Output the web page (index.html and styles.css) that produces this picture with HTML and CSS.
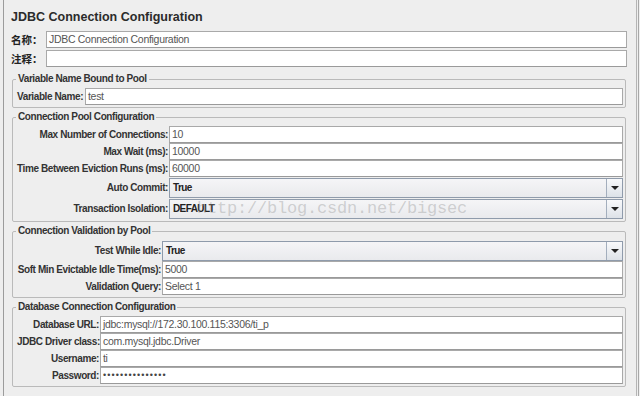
FILE: index.html
```html
<!DOCTYPE html>
<html>
<head>
<meta charset="UTF-8">
<title>JDBC Connection Configuration</title>
<link rel="stylesheet" href="styles.css">
</head>
<body>
<div class="window">
	<div class="panel">
		<h1 class="title">JDBC Connection Configuration</h1>
		<div class="top-row">
			<label class="cjk">名称：</label>
			<div class="field">JDBC Connection Configuration</div>
		</div>
		<div class="top-row">
			<label class="cjk">注释：</label>
			<div class="field"></div>
		</div>

		<fieldset class="group first">
			<legend>Variable Name Bound to Pool</legend>
			<div class="grid g-var">
				<label>Variable Name:</label>
				<div class="field">test</div>
			</div>
		</fieldset>

		<fieldset class="group">
			<legend>Connection Pool Configuration</legend>
			<div class="grid g-pool">
				<label>Max Number of Connections:</label>
				<div class="field">10</div>
				<label>Max Wait (ms):</label>
				<div class="field">10000</div>
				<label>Time Between Eviction Runs (ms):</label>
				<div class="field">60000</div>
				<label>Auto Commit:</label>
				<div class="combo"><span class="val">True</span><span class="btn"></span></div>
				<label>Transaction Isolation:</label>
				<div class="combo"><span class="val">DEFAULT</span><span class="btn"></span></div>
			</div>
		</fieldset>

		<fieldset class="group">
			<legend>Connection Validation by Pool</legend>
			<div class="grid g-valid">
				<label>Test While Idle:</label>
				<div class="combo"><span class="val">True</span><span class="btn"></span></div>
				<label>Soft Min Evictable Idle Time(ms):</label>
				<div class="field">5000</div>
				<label>Validation Query:</label>
				<div class="field">Select 1</div>
			</div>
		</fieldset>

		<fieldset class="group">
			<legend>Database Connection Configuration</legend>
			<div class="grid g-db">
				<label>Database URL:</label>
				<div class="field">jdbc:mysql://172.30.100.115:3306/ti_p</div>
				<label>JDBC Driver class:</label>
				<div class="field">com.mysql.jdbc.Driver</div>
				<label>Username:</label>
				<div class="field">ti</div>
				<label>Password:</label>
				<div class="field pwd">•••••••••••••••</div>
			</div>
		</fieldset>
	</div>
</div>
<div class="watermark">http://blog.csdn.net/bigsec</div>
</body>
</html>
```

FILE: styles.css
```css
*{
	box-sizing:border-box;
}
html,body{
	margin:0;
	padding:0;
}
body{
	position:relative;
	width:640px;
	height:396px;
	overflow:hidden;
	background:#eeeeee;
	font-family:"Liberation Sans","Noto Sans CJK SC",sans-serif;
	font-size:10px;
	color:#333;
}
.window{
	width:639px;
	height:396px;
	padding-left:3px;
	border-right:1px solid #a8a8a8;
}
.panel{
	width:634px;
	height:100%;
	border-left:1px solid #9c9c9c;
	border-right:1px solid #b4b4b4;
	padding:9px 9px 0 7px;
}
.title{
	margin:0 0 6px;
	font:bold 12.5px/16px "Liberation Sans",sans-serif;
	color:#2b2b2b;
}
.top-row{
	display:flex;
	align-items:center;
	height:17px;
	margin-bottom:2px;
}
.top-row label{
	width:35px;
	font:bold 10.5px/17px "Noto Sans CJK SC",sans-serif;
	color:#222;
}
.field{
	flex:1;
	height:17px;
	min-width:0;
	padding:0 2px;
	background:#fff;
	border:1px solid #a9a9a9;
	border-bottom-color:#9a9a9a;
	line-height:15px;
	font-size:10.5px;
	letter-spacing:-0.3px;
	color:#555;
	white-space:nowrap;
	overflow:hidden;
}
.pwd{
	font-size:9px;
	letter-spacing:1.1px;
	color:#444;
}
.group{
	margin:3px 1px 0;
	padding:3px 2px 2px 4px;
	border:1px solid #bababa;
	border-radius:2px;
	min-width:0;
}
.group.first{
	margin-top:6px;
}
.group legend{
	margin-left:-1px;
	padding:0 2px;
	height:12px;
	line-height:12px;
	font-weight:bold;
	letter-spacing:-0.4px;
	color:#333;
}
.grid{
	display:grid;
	align-items:center;
}
.grid label{
	padding-right:1px;
	text-align:right;
	font-weight:bold;
	letter-spacing:-0.4px;
	line-height:17px;
	white-space:nowrap;
	color:#333;
}
.g-var{ grid-template-columns:68px 1fr; }
.g-var label{ text-align:left; }
.g-pool{ grid-template-columns:152px 1fr; }
.g-valid{ grid-template-columns:145px 1fr; }
.g-db{ grid-template-columns:83px 1fr; }

.combo{
	display:flex;
	height:20px;
	margin-top:1px;
	border:1px solid #8f9bab;
	background:linear-gradient(#f5f5f7,#e9eaed);
}
.combo .val{
	flex:1;
	padding-left:3px;
	line-height:18px;
	font-weight:bold;
	letter-spacing:-0.6px;
	color:#222;
}
.combo .btn{
	width:16px;
	display:flex;
	align-items:center;
	justify-content:center;
	border-left:1px solid #a3aebd;
	background:linear-gradient(#f8f9fb,#dde2e8);
}
.combo .btn::after{
	content:"";
	border-left:4px solid transparent;
	border-right:4px solid transparent;
	border-top:4px solid #222;
}
.watermark{
	position:absolute;
	left:197px;
	top:199px;
	font:17px/20px "Liberation Mono",monospace;
	letter-spacing:-0.2px;
	color:rgba(150,150,150,0.4);
	pointer-events:none;
}
```
